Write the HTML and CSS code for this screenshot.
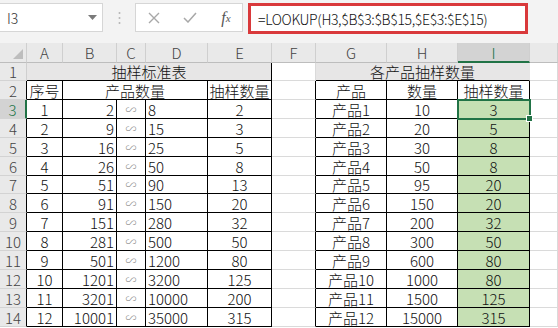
FILE: index.html
```html
<!DOCTYPE html>
<html lang="zh-CN">
<head>
    <meta charset="UTF-8">
    <meta name="viewport" content="width=device-width, initial-scale=1.0">
    <title>抽样标准表</title>
    <link rel="stylesheet" href="styles.css">
</head>
<body>
    <div class="toolbar">
        <div class="namebox">
            <span>I3</span>
            <svg width="9" height="5" viewBox="0 0 9 5"><path d="M0 0 L9 0 L4.5 5 Z" fill="#7a7a7a"/></svg>
        </div>
        <div class="grip">
            <svg width="3" height="14" viewBox="0 0 3 14">
                <circle cx="1.5" cy="2" r="1" fill="#b5b5b5"/>
                <circle cx="1.5" cy="7" r="1" fill="#b5b5b5"/>
                <circle cx="1.5" cy="12" r="1" fill="#b5b5b5"/>
            </svg>
        </div>
        <div class="fxbox">
            <span class="fxbtn">
                <svg width="12" height="12" viewBox="0 0 12 12"><path d="M1 1 L11 11 M11 1 L1 11" stroke="#a8a8a8" stroke-width="1.4"/></svg>
            </span>
            <span class="fxbtn">
                <svg width="14" height="11" viewBox="0 0 14 11"><path d="M1 6 L5 10 L13 1" fill="none" stroke="#a8a8a8" stroke-width="1.5"/></svg>
            </span>
            <span class="fxbtn fx">f<sub>x</sub></span>
        </div>
        <div class="formula">=LOOKUP(H3,$B$3:$B$15,$E$3:$E$15)</div>
    </div>

    <div class="sheet">
        <div class="row hrow">
            <div class="c hd corner"><svg width="10" height="10" viewBox="0 0 10 10"><path d="M10 0 L10 10 L0 10 Z" fill="#bdbdbd"/></svg></div>
            <div class="c hd">A</div>
            <div class="c hd">B</div>
            <div class="c hd">C</div>
            <div class="c hd">D</div>
            <div class="c hd">E</div>
            <div class="c hd">F</div>
            <div class="c hd">G</div>
            <div class="c hd">H</div>
            <div class="c hd sel-col">I</div>
            <div class="c hd"></div>
        </div>

        <div class="row short">
            <div class="c rn">1</div>
            <div class="c title left-title">抽样标准表</div>
            <div class="c"></div>
            <div class="c title right-title">各产品抽样数量</div>
            <div class="c"></div>
        </div>

        <div class="row">
            <div class="c rn edge">2</div>
            <div class="c t">序号</div>
            <div class="c t span3">产品数量</div>
            <div class="c t">抽样数量</div>
            <div class="c edge"></div>
            <div class="c t">产品</div>
            <div class="c t">数量</div>
            <div class="c t">抽样数量</div>
            <div class="c"></div>
        </div>

        <div class="row">
            <div class="c rn sel-row">3</div>
            <div class="c t">1</div><div class="c t rt">2</div><div class="c t tilde">∽</div><div class="c t lt">8</div><div class="c t">2</div>
            <div class="c edge"></div>
            <div class="c t">产品1</div><div class="c t">10</div><div class="c t green active">3</div>
            <div class="c"></div>
        </div>

        <div class="row">
            <div class="c rn edge">4</div>
            <div class="c t">2</div><div class="c t rt">9</div><div class="c t tilde">∽</div><div class="c t lt">15</div><div class="c t">3</div>
            <div class="c edge"></div>
            <div class="c t">产品2</div><div class="c t">20</div><div class="c t green">5</div>
            <div class="c"></div>
        </div>

        <div class="row">
            <div class="c rn edge">5</div>
            <div class="c t">3</div><div class="c t rt">16</div><div class="c t tilde">∽</div><div class="c t lt">25</div><div class="c t">5</div>
            <div class="c edge"></div>
            <div class="c t">产品3</div><div class="c t">30</div><div class="c t green">8</div>
            <div class="c"></div>
        </div>

        <div class="row">
            <div class="c rn edge">6</div>
            <div class="c t">4</div><div class="c t rt">26</div><div class="c t tilde">∽</div><div class="c t lt">50</div><div class="c t">8</div>
            <div class="c edge"></div>
            <div class="c t">产品4</div><div class="c t">50</div><div class="c t green">8</div>
            <div class="c"></div>
        </div>

        <div class="row short">
            <div class="c rn edge">7</div>
            <div class="c t">5</div><div class="c t rt">51</div><div class="c t tilde">∽</div><div class="c t lt">90</div><div class="c t">13</div>
            <div class="c edge"></div>
            <div class="c t">产品5</div><div class="c t">95</div><div class="c t green">20</div>
            <div class="c"></div>
        </div>

        <div class="row">
            <div class="c rn edge">8</div>
            <div class="c t">6</div><div class="c t rt">91</div><div class="c t tilde">∽</div><div class="c t lt">150</div><div class="c t">20</div>
            <div class="c edge"></div>
            <div class="c t">产品6</div><div class="c t">150</div><div class="c t green">20</div>
            <div class="c"></div>
        </div>

        <div class="row">
            <div class="c rn edge">9</div>
            <div class="c t">7</div><div class="c t rt">151</div><div class="c t tilde">∽</div><div class="c t lt">280</div><div class="c t">32</div>
            <div class="c edge"></div>
            <div class="c t">产品7</div><div class="c t">200</div><div class="c t green">32</div>
            <div class="c"></div>
        </div>

        <div class="row">
            <div class="c rn edge">10</div>
            <div class="c t">8</div><div class="c t rt">281</div><div class="c t tilde">∽</div><div class="c t lt">500</div><div class="c t">50</div>
            <div class="c edge"></div>
            <div class="c t">产品8</div><div class="c t">300</div><div class="c t green">50</div>
            <div class="c"></div>
        </div>

        <div class="row">
            <div class="c rn edge">11</div>
            <div class="c t">9</div><div class="c t rt">501</div><div class="c t tilde">∽</div><div class="c t lt">1200</div><div class="c t">80</div>
            <div class="c edge"></div>
            <div class="c t">产品9</div><div class="c t">600</div><div class="c t green">80</div>
            <div class="c"></div>
        </div>

        <div class="row">
            <div class="c rn edge">12</div>
            <div class="c t">10</div><div class="c t rt">1201</div><div class="c t tilde">∽</div><div class="c t lt">3200</div><div class="c t">125</div>
            <div class="c edge"></div>
            <div class="c t">产品10</div><div class="c t">1000</div><div class="c t green">80</div>
            <div class="c"></div>
        </div>

        <div class="row">
            <div class="c rn edge">13</div>
            <div class="c t">11</div><div class="c t rt">3201</div><div class="c t tilde">∽</div><div class="c t lt">10000</div><div class="c t">200</div>
            <div class="c edge"></div>
            <div class="c t">产品11</div><div class="c t">1500</div><div class="c t green">125</div>
            <div class="c"></div>
        </div>

        <div class="row">
            <div class="c rn edge">14</div>
            <div class="c t">12</div><div class="c t rt">10001</div><div class="c t tilde">∽</div><div class="c t lt">35000</div><div class="c t">315</div>
            <div class="c edge"></div>
            <div class="c t">产品12</div><div class="c t">15000</div><div class="c t green">315</div>
            <div class="c"></div>
        </div>
    </div>
</body>
</html>
```

FILE: styles.css
```css
body {
    margin: 0;
    width: 558px;
    height: 328px;
    overflow: hidden;
    background-color: #fff;
    font-family: "Noto Sans CJK SC", "Noto Sans", sans-serif;
    font-weight: 300;
}

/* formula bar */
.toolbar {
    height: 43px;
    box-sizing: border-box;
    padding-top: 3px;
    display: flex;
    align-items: flex-start;
    background-color: #f3f3f3;
}
.namebox {
    width: 103px;
    height: 29px;
    box-sizing: border-box;
    padding: 0 5px 0 7px;
    display: flex;
    align-items: center;
    justify-content: space-between;
    background-color: #fff;
    border: 1px solid #d6d6d6;
    border-left: none;
    font-size: 14px;
    color: #333;
}
.grip {
    width: 32px;
    height: 29px;
    display: flex;
    align-items: center;
    justify-content: center;
}
.fxbox {
    width: 108px;
    height: 29px;
    box-sizing: border-box;
    display: grid;
    grid-template-columns: 36px 36px 36px;
    align-items: center;
    background-color: #fff;
    border: 1px solid #d6d6d6;
}
.fxbtn {
    display: flex;
    justify-content: center;
    align-items: center;
}
.fx {
    font-family: "Liberation Serif", serif;
    font-style: italic;
    font-size: 16px;
    color: #555;
}
.fx sub {
    font-size: 11px;
    vertical-align: -2px;
}
.formula {
    margin-left: 5px;
    width: 280px;
    height: 31px;
    box-sizing: border-box;
    padding-left: 7px;
    display: flex;
    align-items: center;
    background-color: #fff;
    border: 3px solid #d9393b;
    font-size: 14px;
    letter-spacing: -0.35px;
    color: #111;
    white-space: nowrap;
}

/* sheet grid */
.row {
    display: grid;
    grid-template-columns: 27px 36px 54px 29px 62px 64px 44px 71px 71px 72px 28px;
    height: 19px;
}
.row.short {
    height: 18px;
}
.row.hrow {
    height: 20px;
}
.c {
    box-sizing: border-box;
    border-right: 1px solid #dadada;
    border-bottom: 1px solid #dadada;
    display: flex;
    align-items: center;
    justify-content: center;
    font-size: 15px;
    line-height: 1;
    color: #111;
    white-space: nowrap;
}
.hd {
    background-color: #e9e9e9;
    border-right-color: #cfcfcf;
    border-bottom-color: #bdbdbd;
    color: #444;
}
.corner {
    justify-content: flex-end;
    align-items: flex-end;
    padding: 0 3px 3px 0;
}
.sel-col {
    background-color: #d3d3d3;
    border-bottom: 2px solid #217346;
    color: #217346;
}
.rn {
    background-color: #e9e9e9;
    border-right-color: #cfcfcf;
    border-bottom-color: #d3d3d3;
    color: #444;
}
.sel-row {
    background-color: #d3d3d3;
    border-right: 2px solid #217346;
    color: #217346;
}
.edge {
    border-right-color: #000;
}
.title {
    background-color: #e7e6e6;
    border-bottom-color: #000;
    border-right-color: #e7e6e6;
}
.left-title {
    grid-column: span 5;
    border-right-color: #000;
}
.right-title {
    grid-column: span 3;
}
.span3 {
    grid-column: span 3;
}
.t {
    border-right-color: #000;
    border-bottom-color: #000;
}
.rt {
    justify-content: flex-end;
    padding-right: 2px;
}
.lt {
    justify-content: flex-start;
    padding-left: 2px;
}
.tilde {
    font-size: 11px;
    color: #888;
}
.green {
    background-color: #c6e0b4;
}
.active {
    position: relative;
    outline: 2px solid #217346;
    outline-offset: -1px;
    z-index: 1;
}
.active::after {
    content: "";
    position: absolute;
    right: -4px;
    bottom: -4px;
    width: 5px;
    height: 5px;
    background-color: #217346;
    border: 1px solid #fff;
}
```
